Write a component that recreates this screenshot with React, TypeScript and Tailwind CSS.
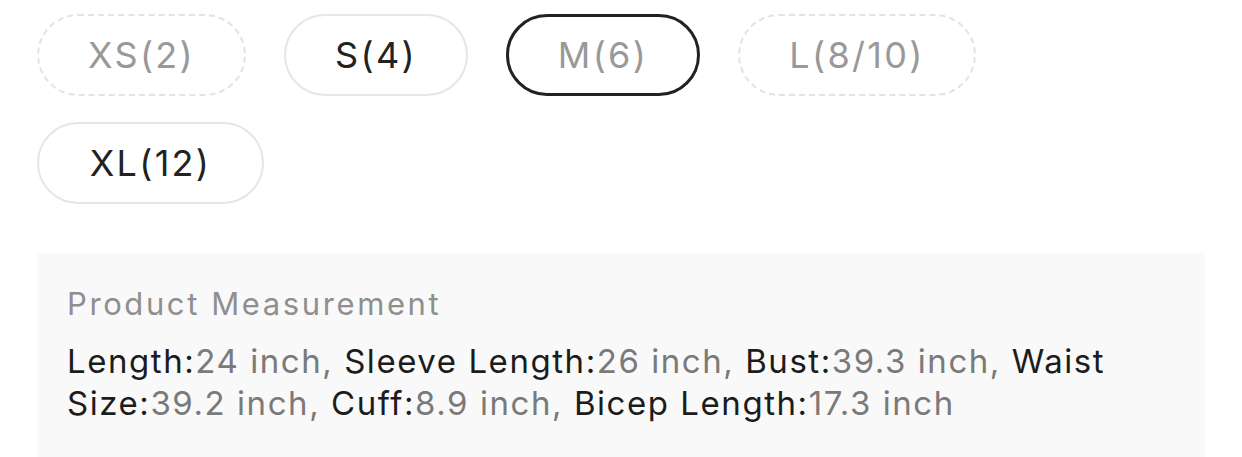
const sizes = [
  { label: "XS(2)", state: "disabled", w: "w-[209px]" },
  { label: "S(4)", state: "normal", w: "w-[184px]" },
  { label: "M(6)", state: "selected", w: "w-[194px]" },
  { label: "L(8/10)", state: "disabled", w: "w-[238px]" },
  { label: "XL(12)", state: "normal", w: "w-[227px]" },
];

const specs = [
  ["Length:", "24 inch, "],
  ["Sleeve Length:", "26 inch, "],
  ["Bust:", "39.3 inch, "],
  ["Waist Size:", "39.2 inch, "],
  ["Cuff:", "8.9 inch, "],
  ["Bicep Length:", "17.3 inch"],
];

function Chip({ label, state, w }: { label: string; state: string; w: string }) {
  const cls =
    state === "disabled"
      ? "border-2 border-dashed border-[#e3e3e3] text-[#999999]"
      : state === "selected"
        ? "border-[3px] border-[#222222] text-[#999999]"
        : "border-2 border-[#e6e6e6] text-[#222222]";
  return (
    <div className={`h-[82px] ${w} rounded-full flex items-center justify-center text-[36px] tracking-[2.3px] ${cls}`}>
      {label}
    </div>
  );
}

export default function App() {
  return (
    <div className="w-[1242px] h-[457px] overflow-hidden bg-white font-['Inter',sans-serif] pl-[37px] pr-[37px] pt-[14px]">
      <div className="flex flex-wrap gap-x-[38px] gap-y-[26px] w-[1000px]">
        {sizes.map((s) => (
          <Chip key={s.label} {...s} />
        ))}
      </div>
      <div className="mt-[49px] bg-[#f9f9f9] px-[30px] pt-[33px] pb-[40px]">
        <div className="text-[31px] tracking-[2.6px] text-[#8f8f8f] leading-[36px]">Product Measurement</div>
        <p className="mt-[18px] text-[33px] tracking-[1.55px] leading-[42px] text-[#1c1c1c]">
          {specs.map(([k, v]) => (
            <span key={k}>
              {k}
              <span className="text-[#7a7a7a]">{v}</span>
            </span>
          ))}
        </p>
      </div>
    </div>
  );
}
